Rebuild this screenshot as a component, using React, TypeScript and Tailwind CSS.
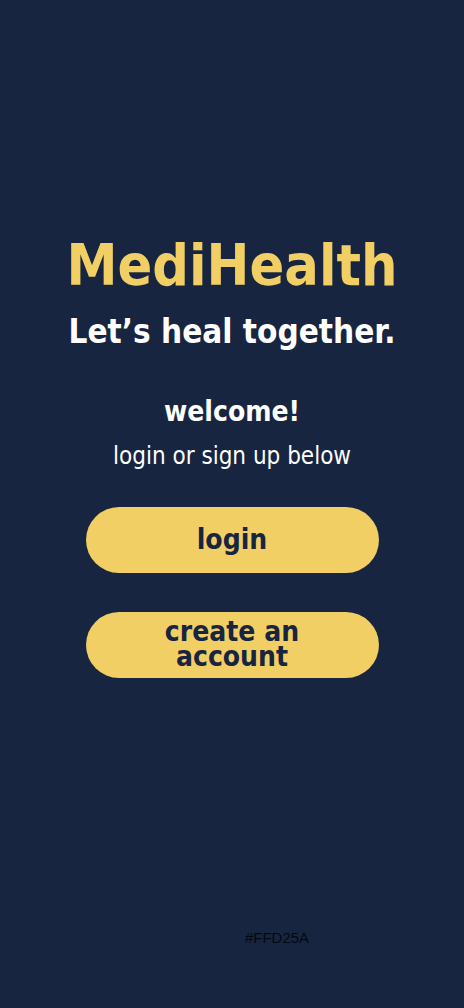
export default function App() {
  return (
    <div className="min-h-screen w-full bg-[#172541] flex flex-col items-center font-['DejaVu_Sans_Condensed','DejaVu_Sans',sans-serif]">
      <h1 className="mt-[230px] text-[57px] leading-[70px] font-bold text-[#F1CF65]">MediHealth</h1>
      <p className="mt-[12px] text-[33px] leading-[40px] font-bold text-white">Let’s heal together.</p>
      <p className="mt-[43px] text-[28px] leading-[34px] font-bold text-white">welcome!</p>
      <p className="mt-[12px] text-[24px] leading-[30px] text-white">login or sign up below</p>

      <button className="mt-[36px] h-[66px] w-[293px] rounded-full bg-[#F1CF65] text-[28px] leading-[28px] font-bold text-[#172541]">
        login
      </button>
      <button className="mt-[39px] h-[66px] w-[293px] rounded-full bg-[#F1CF65] text-[28px] leading-[25px] font-bold text-[#172541] pb-[2px]">
        create an
        <br />
        account
      </button>

      <p className="mt-[251px] ml-[90px] text-[15px] leading-[18px] font-['Liberation_Sans',sans-serif] text-[#05080f]">#FFD25A</p>
    </div>
  );
}
